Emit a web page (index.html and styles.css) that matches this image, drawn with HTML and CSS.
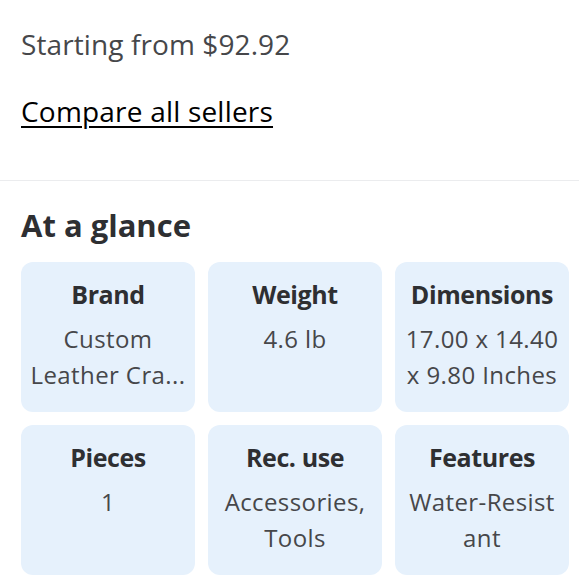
FILE: index.html
```html
<!DOCTYPE html>
<html>
<head>
<meta charset="utf-8">
<link rel="stylesheet" href="styles.css">
</head>
<body>
<section class="sellers">
  <p class="price">Starting from $92.92</p>
  <a class="compare" href="#">Compare all sellers</a>
</section>
<hr class="divider">
<section class="glance">
  <h2 class="title">At a glance</h2>
  <div class="grid">
    <div class="card"><div class="label">Brand</div><div class="value">Custom Leather Cra...</div></div>
    <div class="card"><div class="label">Weight</div><div class="value">4.6 lb</div></div>
    <div class="card"><div class="label">Dimensions</div><div class="value">17.00 x 14.40 x 9.80 Inches</div></div>
    <div class="card"><div class="label">Pieces</div><div class="value">1</div></div>
    <div class="card"><div class="label">Rec. use</div><div class="value">Accessories, Tools</div></div>
    <div class="card"><div class="label">Features</div><div class="value breakall">Water-Resistant</div></div>
  </div>
</section>
</body>
</html>
```
FILE: styles.css
```css
html, body {
  margin: 0;
  padding: 0;
  background: #ffffff;
}
body {
  font-family: "Open Sans", "Lato", sans-serif;
  color: #2e2f32;
}
.sellers {
  padding: 24px 21px 0 21px;
  display: flex;
  flex-direction: column;
  align-items: flex-start;
}
.price {
  margin: 0;
  font-size: 28px;
  line-height: 40px;
  letter-spacing: 0.1px;
  color: #46474a;
}
.compare {
  margin-top: 27px;
  font-size: 28px;
  line-height: 40px;
  letter-spacing: 0.2px;
  color: #000000;
  text-decoration: underline;
  text-underline-offset: 4px;
  text-decoration-thickness: 2px;
}
.divider {
  border: 0;
  height: 1px;
  background: #ebecee;
  margin: 49px 0 0 0;
}
.glance {
  padding: 0 10px 0 21px;
}
.title {
  margin: 24px 0 0 0;
  font-size: 31px;
  line-height: 40px;
  font-weight: 700;
  color: #2e2f32;
}
.grid {
  margin-top: 17px;
  display: grid;
  grid-template-columns: repeat(3, 174px);
  grid-auto-rows: 150px;
  gap: 13px;
}
.card {
  background: #e6f1fc;
  border-radius: 12px;
  padding: 14px 9px 0 9px;
  text-align: center;
}
.label {
  font-size: 25px;
  line-height: 36px;
  font-weight: 700;
  letter-spacing: -0.4px;
  color: #2e2f32;
}
.value {
  margin-top: 9px;
  font-size: 24px;
  line-height: 36px;
  letter-spacing: 0.4px;
  color: #46474a;
}
.breakall {
  word-break: break-all;
}
```
